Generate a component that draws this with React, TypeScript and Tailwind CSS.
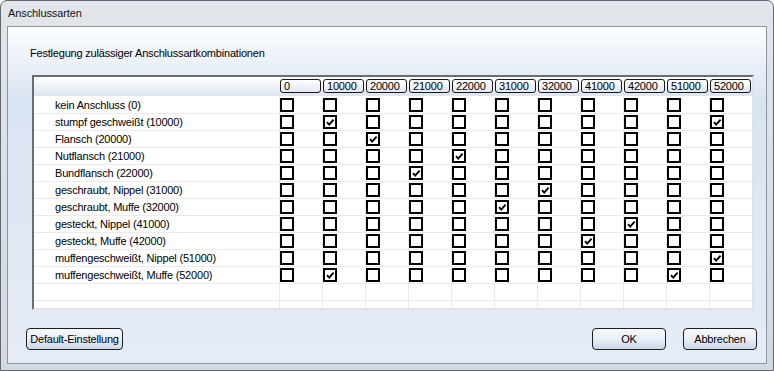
import React from 'react'

const FONT = "'Liberation Sans', Arial, sans-serif"

const COLS = ['0', '10000', '20000', '21000', '22000', '31000', '32000', '41000', '42000', '51000', '52000']

// label + indices of checked columns
const ROWS: [string, number[]][] = [
  ['kein Anschluss (0)', []],
  ['stumpf geschweißt (10000)', [1, 10]],
  ['Flansch (20000)', [2]],
  ['Nutflansch (21000)', [4]],
  ['Bundflansch (22000)', [3]],
  ['geschraubt, Nippel (31000)', [6]],
  ['geschraubt, Muffe (32000)', [5]],
  ['gesteckt, Nippel (41000)', [8]],
  ['gesteckt, Muffe (42000)', [7]],
  ['muffengeschweißt, Nippel (51000)', [10]],
  ['muffengeschweißt, Muffe (52000)', [1, 9]],
]

function Check({ on }: { on: boolean }) {
  return (
    <div className="w-[14px] h-[14px] border-2 border-black bg-white flex items-start justify-start">
      {on && (
        <svg width="9" height="9" viewBox="0 0 9 9" className="ml-[1px] mt-[1px]">
          <path d="M1 4.2 L3.2 6.6 L7.6 1.6" fill="none" stroke="#000" strokeWidth="1.9" />
        </svg>
      )}
    </div>
  )
}

function WinButton({ label, w }: { label: string; w: string }) {
  return (
    <button
      type="button"
      className={`${w} h-[22px] rounded-[4px] border border-[#1e1e1e] bg-linear-to-b from-[#f6f8fb] via-[#e9eff7] to-[#c9d7ea] text-[11px] tracking-[-0.2px] text-black leading-none`}
    >
      {label}
    </button>
  )
}

export default function App() {
  return (
    <div className="w-[774px] h-[371px] bg-white text-black" style={{ fontFamily: FONT }}>
      <div className="h-full flex flex-col rounded-t-[7px] border border-[#60676f] bg-linear-to-b from-[#e2e6eb] to-[#d3d9e0]">
        {/* Title bar */}
        <div className="h-[25px] pl-[7px] flex items-center text-[11px] tracking-[-0.1px] text-[#111]">Anschlussarten</div>

        {/* Client area */}
        <div className="mx-[6px] mb-[6px] flex-1 border border-[#8c97a4] bg-linear-to-b from-[#fcfdfe] via-[#d9e4f2] via-22% to-[#e6ecf6] flex flex-col text-[11px] tracking-[-0.2px]">
          <div className="pt-[20px] pl-[22px] h-[33px] leading-[13px]">Festlegung zulässiger Anschlussartkombinationen</div>

          {/* Grid */}
          <div className="mt-[15px] ml-[24px] w-[722px] h-[235px] border-2 border-t-[#6d6d6d] border-l-[#6d6d6d] border-r-[#e2e2e2] border-b-[#e2e2e2] bg-white overflow-hidden flex flex-col">
            <div className="h-[20px] shrink-0 flex bg-linear-to-b from-white to-[#dde5ef] border-b border-white">
              <div className="w-[245px] shrink-0" />
              {COLS.map((c) => (
                <div key={c} className="w-[43px] shrink-0 pl-[1px] pt-[2px]">
                  <div className="w-[41px] h-[14px] rounded-[3px] border border-[#1a1a1a] bg-linear-to-b from-white to-[#dfe7f2] pl-[3px] leading-[12px]">
                    {c}
                  </div>
                </div>
              ))}
            </div>

            {ROWS.map(([label, on]) => (
              <div key={label} className="h-[17px] shrink-0 flex border-b border-[#ebebeb]">
                <div className="w-[245px] shrink-0 pl-[21px] leading-[16px]">{label}</div>
                {COLS.map((c, i) => (
                  <div key={c} className="w-[43px] shrink-0 border-l border-[#ebebeb] flex items-center">
                    <Check on={on.includes(i)} />
                  </div>
                ))}
              </div>
            ))}

            {[0, 1].map((r) => (
              <div key={r} className="h-[17px] shrink-0 flex border-b border-[#ebebeb]">
                <div className="w-[245px] shrink-0" />
                {COLS.map((c) => (
                  <div key={c} className="w-[43px] shrink-0 border-l border-[#ebebeb]" />
                ))}
              </div>
            ))}
          </div>

          {/* Buttons */}
          <div className="mt-[18px] pl-[18px] pr-[9px] flex items-center justify-between">
            <WinButton label="Default-Einstellung" w="w-[97px]" />
            <div className="flex gap-[17px]">
              <WinButton label="OK" w="w-[74px]" />
              <WinButton label="Abbrechen" w="w-[74px]" />
            </div>
          </div>
        </div>
      </div>
    </div>
  )
}
